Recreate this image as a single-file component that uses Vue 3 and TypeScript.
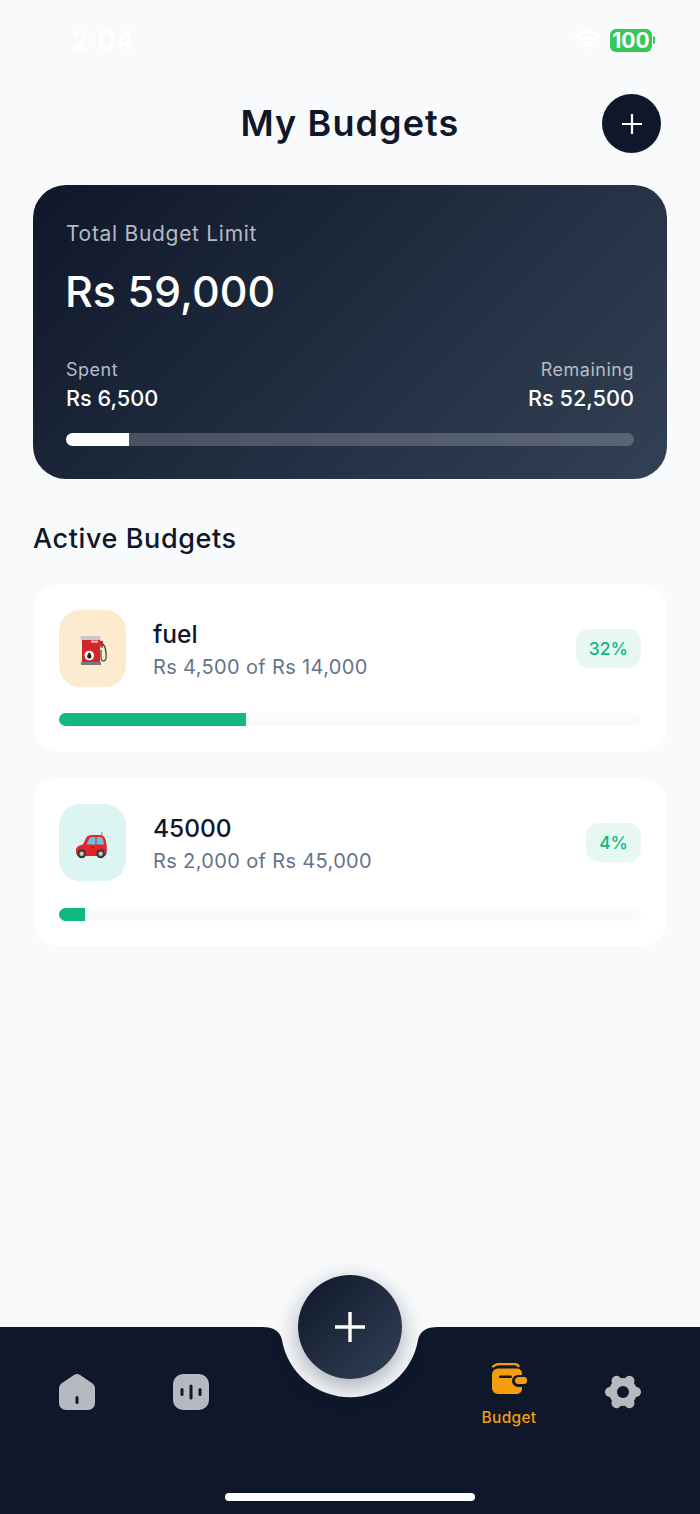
<template>
  <div class="page">
    <!-- status bar -->
    <div class="status-bar">
      <span class="time">2:04</span>
      <div class="status-right">
        <svg class="wifi" width="26" height="20" viewBox="0 0 28 22">
          <path d="M1.5 7.5a18 18 0 0 1 25 0M6 12a11.5 11.5 0 0 1 16 0M10 16.2a5.6 5.6 0 0 1 8 0" fill="none" stroke="#fff" stroke-width="3.6" stroke-linecap="round" />
          <circle cx="14" cy="19.5" r="2.2" fill="#fff" />
        </svg>
        <div class="battery"><span>100</span></div>
        <i class="battery-cap"></i>
      </div>
    </div>

    <header class="header">
      <h1 class="title">My Budgets</h1>
      <button class="add-btn">
        <svg width="22" height="22" viewBox="0 0 22 22"><path d="M11 1v20M1 11h20" stroke="#fff" stroke-width="2.2" /></svg>
      </button>
    </header>

    <main class="content">
      <section class="summary">
        <div class="summary-label">Total Budget Limit</div>
        <div class="summary-total">Rs 59,000</div>
        <div class="summary-row">
          <div>
            <div class="small-label">Spent</div>
            <div class="small-value">Rs 6,500</div>
          </div>
          <div class="right">
            <div class="small-label">Remaining</div>
            <div class="small-value">Rs 52,500</div>
          </div>
        </div>
        <div class="summary-track">
          <div class="summary-fill" :style="{ width: spentPct + '%' }"></div>
        </div>
      </section>

      <h2 class="section-title">Active Budgets</h2>

      <div class="budget-list">
        <article v-for="b in budgets" :key="b.name" class="budget">
          <div class="budget-top">
            <div class="budget-icon" :style="{ background: b.tint }">
              <svg v-if="b.kind === 'fuel'" width="67" height="77" viewBox="0 0 67 77">
                <path d="M41 33h2.500v4H41M44 34c2 2 3.500 8 3 14-.3 4-5 4-5-.5V40" fill="none" stroke="#444" stroke-width="1.200" />
                <rect x="41" y="31" width="3" height="5" fill="#c4282e" />
                <rect x="23" y="29" width="18" height="23" fill="#d3262c" />
                <rect x="21.500" y="26" width="20" height="4" rx="1" fill="#c9c9c9" />
                <rect x="32" y="30.500" width="7" height="2.200" fill="#e8b9b9" />
                <rect x="22" y="52" width="20" height="3" fill="#7b7b7b" />
                <circle cx="30.300" cy="45.500" r="4.800" fill="#fff" />
                <path d="M30.300 42.300c1.500 2 2.200 3 2.200 4.100a2.200 2.200 0 0 1-4.400 0c0-1.100.7-2.100 2.200-4.100Z" fill="#222" />
              </svg>
              <svg v-else width="67" height="77" viewBox="0 0 67 77">
                <path d="M42.500 31.500 43 28" stroke="#555" stroke-width=".7" />
                <path d="M17 47C17 43 19 41.500 24 40.500L27 34C28 32 30 31 33 31H41C45 31 46.500 34 47 38C48 42 48 46 47.500 50C47 51.500 46 52 45 52H20C18 52 17 50 17 47Z" fill="#e8222a" />
                <path d="M27.500 40.500 30 35C30.500 33.800 31.500 33 33 33H41C43 33 44 34.500 44.500 37L45 40.500Z" fill="#6cc0dc" />
                <path d="M37 33v7.500" stroke="#d81e26" stroke-width="1" />
                <rect x="32" y="43" width="3.500" height="1.200" fill="#a01219" />
                <circle cx="22.700" cy="49.800" r="4.500" fill="#3a3a3a" />
                <circle cx="22.700" cy="49.800" r="2.200" fill="#c4c4c4" />
                <circle cx="41.700" cy="49.800" r="4.500" fill="#3a3a3a" />
                <circle cx="41.700" cy="49.800" r="2.200" fill="#c4c4c4" />
              </svg>
            </div>
            <div class="budget-text">
              <div class="budget-name">{{ b.name }}</div>
              <div class="budget-sub">Rs {{ fmt(b.spent) }} of Rs {{ fmt(b.limit) }}</div>
            </div>
            <div class="budget-pct">{{ b.pct }}%</div>
          </div>
          <div class="budget-track">
            <div class="budget-fill" :style="{ width: (b.spent / b.limit) * 100 + '%' }"></div>
          </div>
        </article>
      </div>
    </main>

    <nav class="nav">
      <!-- notch cut out of the bar -->
      <svg class="notch" width="180" height="72" viewBox="0 0 180 72">
        <path d="M0 0H2C14 0 20 4 22 13A69 69 0 0 0 158 13C160 4 166 0 178 0H180V-2H0Z" fill="#f8fafc" />
      </svg>
      <button class="fab">
        <svg width="34" height="34" viewBox="0 0 34 34"><path d="M17 2v30M2 17h30" stroke="#fff" stroke-width="3.4" /></svg>
      </button>
      <div class="nav-group">
        <div class="nav-item">
          <svg width="36" height="36" viewBox="0 0 36 36">
            <path d="M14.500 1.200a6 6 0 0 1 7 0l11 7.600A7 7 0 0 1 36 14.600V29a7 7 0 0 1-7 7H7a7 7 0 0 1-7-7V14.600a7 7 0 0 1 3.500-5.800Z" fill="#b6b9bf" />
            <rect x="16.500" y="22" width="3" height="8" rx="1.500" fill="#0f172a" />
          </svg>
        </div>
        <div class="nav-item">
          <svg width="36" height="36" viewBox="0 0 36 36">
            <rect width="36" height="36" rx="10" fill="#b6b9bf" />
            <rect x="7.500" y="14" width="3" height="8" rx="1.500" fill="#0f172a" />
            <rect x="16.500" y="10.500" width="3" height="15" rx="1.500" fill="#0f172a" />
            <rect x="25.500" y="14" width="3" height="8" rx="1.500" fill="#0f172a" />
          </svg>
        </div>
      </div>
      <div class="nav-group">
        <div class="nav-item active">
          <svg width="36" height="32" viewBox="0 0 36 32">
            <path d="M2 3.500C4 1.500 6 1 9 1h14c2 0 3.500.6 4.500 2" fill="none" stroke="#f59e0b" stroke-width="2.400" stroke-linecap="round" />
            <path d="M7 5.500h19a5 5 0 0 1 5 5v1.500h-4a6 6 0 0 0 0 12h4v2a5 5 0 0 1-5 5H7a6 6 0 0 1-6-6V11.500a6 6 0 0 1 6-6Z" fill="#f59e0b" />
            <rect x="8" y="12.500" width="13" height="2.600" rx="1.300" fill="#0f172a" />
            <path d="M27.500 14H33a3 3 0 0 1 3 3v1a3 3 0 0 1-3 3h-5.500a3.500 3.500 0 0 1 0-7Z" fill="#f59e0b" />
          </svg>
          <span>Budget</span>
        </div>
        <div class="nav-item">
          <svg width="36" height="36" viewBox="0 0 36 36">
            <g stroke="#b6b9bf" stroke-width="10" stroke-linecap="round">
              <path d="M5 18h26" />
              <path d="M11.500 6.740 24.500 29.260" />
              <path d="M24.500 6.740 11.500 29.260" />
            </g>
            <circle cx="18" cy="18" r="14" fill="#b6b9bf" />
            <circle cx="18" cy="18" r="6" fill="#0f172a" />
          </svg>
        </div>
      </div>
      <div class="home-indicator"></div>
    </nav>
  </div>
</template>

<script setup lang="ts">
const budgets = [
  { name: 'fuel', kind: 'fuel', tint: '#fdebd0', spent: 4500, limit: 14000, pct: 32 },
  { name: '45000', kind: 'car', tint: '#dcf5f2', spent: 2000, limit: 45000, pct: 4 },
]

const spentPct = (6500 / 59000) * 100

function fmt(n: number) {
  return n.toLocaleString('en-US')
}
</script>

<style>
html,
body {
  margin: 0;
  background: #f8fafc;
}
</style>

<style scoped>
.page {
  width: 700px;
  height: 1514px;
  display: flex;
  flex-direction: column;
  background: #f8fafc;
  font-family: Inter, 'Liberation Sans', sans-serif;
  color: #0f172a;
  overflow: hidden;
}

.status-bar {
  height: 80px;
  display: flex;
  justify-content: space-between;
  align-items: center;
  padding: 0 45px 0 72px;
  box-sizing: border-box;
}

.time {
  color: #fff;
  font-size: 27px;
  font-weight: 600;
}

.status-right {
  display: flex;
  align-items: center;
}

.wifi {
  margin-right: 10px;
}

.battery {
  width: 42px;
  height: 23px;
  border-radius: 6px;
  background: #34c759;
  color: #fff;
  font-size: 21px;
  font-weight: 700;
  line-height: 23px;
  text-align: center;
}

.battery-cap {
  width: 2px;
  height: 8px;
  margin-left: 1px;
  border-radius: 0 2px 2px 0;
  background: #34c759;
}

.header {
  position: relative;
  height: 87px;
  display: flex;
  justify-content: center;
  align-items: center;
  padding-bottom: 2px;
  box-sizing: border-box;
}

.title {
  margin: 0;
  font-size: 36px;
  font-weight: 600;
  letter-spacing: 1.1px;
}

.add-btn {
  position: absolute;
  right: 39px;
  top: 14px;
  width: 59px;
  height: 59px;
  border: 0;
  border-radius: 50%;
  padding: 0;
  background: #0f172a;
  display: flex;
  align-items: center;
  justify-content: center;
}

.content {
  flex: 1;
  padding: 18px 33px 0;
}

.summary {
  height: 294px;
  box-sizing: border-box;
  padding: 37px 33px 0;
  border-radius: 33px;
  background: linear-gradient(135deg, #0f172a, #334155);
  color: #fff;
}

.summary-label {
  font-size: 21px;
  line-height: 24px;
  letter-spacing: 0.7px;
  color: #b5bac3;
}

.summary-total {
  margin-top: 18px;
  margin-left: -1px;
  font-size: 43px;
  line-height: 54px;
  font-weight: 500;
}

.summary-row {
  margin-top: 40px;
  display: flex;
  justify-content: space-between;
}

.right {
  text-align: right;
}

.small-label {
  font-size: 18px;
  line-height: 24px;
  letter-spacing: 0.5px;
  color: #b5bac3;
}

.small-value {
  margin-top: 3px;
  font-size: 21.700px;
  line-height: 26px;
  font-weight: 500;
}

.summary-track {
  margin-top: 22px;
  height: 13px;
  border-radius: 7px;
  background: rgba(255, 255, 255, 0.2);
  overflow: hidden;
}

.summary-fill {
  height: 100%;
  background: #fff;
}

.section-title {
  margin: 42px 0 27px;
  font-size: 27px;
  line-height: 36px;
  font-weight: 500;
  letter-spacing: 0.6px;
}

.budget-list {
  display: flex;
  flex-direction: column;
  gap: 26.400px;
}

.budget {
  height: 168px;
  box-sizing: border-box;
  padding: 26px 26px 0;
  border-radius: 26px;
  background: #fff;
}

.budget-top {
  display: flex;
  align-items: center;
}

.budget-icon {
  width: 67px;
  height: 77px;
  border-radius: 21px;
}

.budget-icon svg {
  display: block;
}

.budget-text {
  flex: 1;
  margin-left: 27px;
}

.budget-name {
  font-size: 24.500px;
  line-height: 32px;
  font-weight: 500;
}

.budget-sub {
  margin-top: 4px;
  font-size: 20px;
  line-height: 26px;
  letter-spacing: 0.35px;
  color: #64748b;
}

.budget-pct {
  height: 39px;
  padding: 0 13px;
  border-radius: 13px;
  background: #e7f8f2;
  color: #10b981;
  font-size: 17.500px;
  font-weight: 500;
  line-height: 39px;
}

.budget-track {
  margin-top: 26.300px;
  height: 13px;
  border-radius: 7px;
  background: #f8fafc;
  overflow: hidden;
}

.budget-fill {
  height: 100%;
  background: #10b981;
}

.nav {
  position: relative;
  height: 187px;
  box-sizing: border-box;
  padding: 30px 20px 0;
  display: flex;
  justify-content: space-between;
  align-items: flex-start;
  background: #0f172a;
}

.notch {
  position: absolute;
  left: 260px;
  top: 0;
  overflow: visible;
}

.fab {
  position: absolute;
  left: 298px;
  top: -52px;
  width: 104px;
  height: 104px;
  border: 0;
  padding: 0;
  border-radius: 50%;
  background: linear-gradient(135deg, #0f172a, #334155);
  box-shadow: 0 8px 24px rgba(15, 23, 42, 0.35);
  display: flex;
  align-items: center;
  justify-content: center;
}

.nav-group {
  display: flex;
}

.nav-item {
  width: 114px;
  display: flex;
  flex-direction: column;
  align-items: center;
  padding-top: 17px;
}

.nav-item.active {
  padding-top: 6px;
  color: #f59e0b;
  font-size: 15.500px;
  font-weight: 500;
  line-height: 20px;
  letter-spacing: 0.3px;
}

.nav-item.active span {
  margin-top: 13px;
}

.home-indicator {
  position: absolute;
  left: 225px;
  bottom: 13px;
  width: 250px;
  height: 8px;
  border-radius: 4px;
  background: #fff;
}
</style>
